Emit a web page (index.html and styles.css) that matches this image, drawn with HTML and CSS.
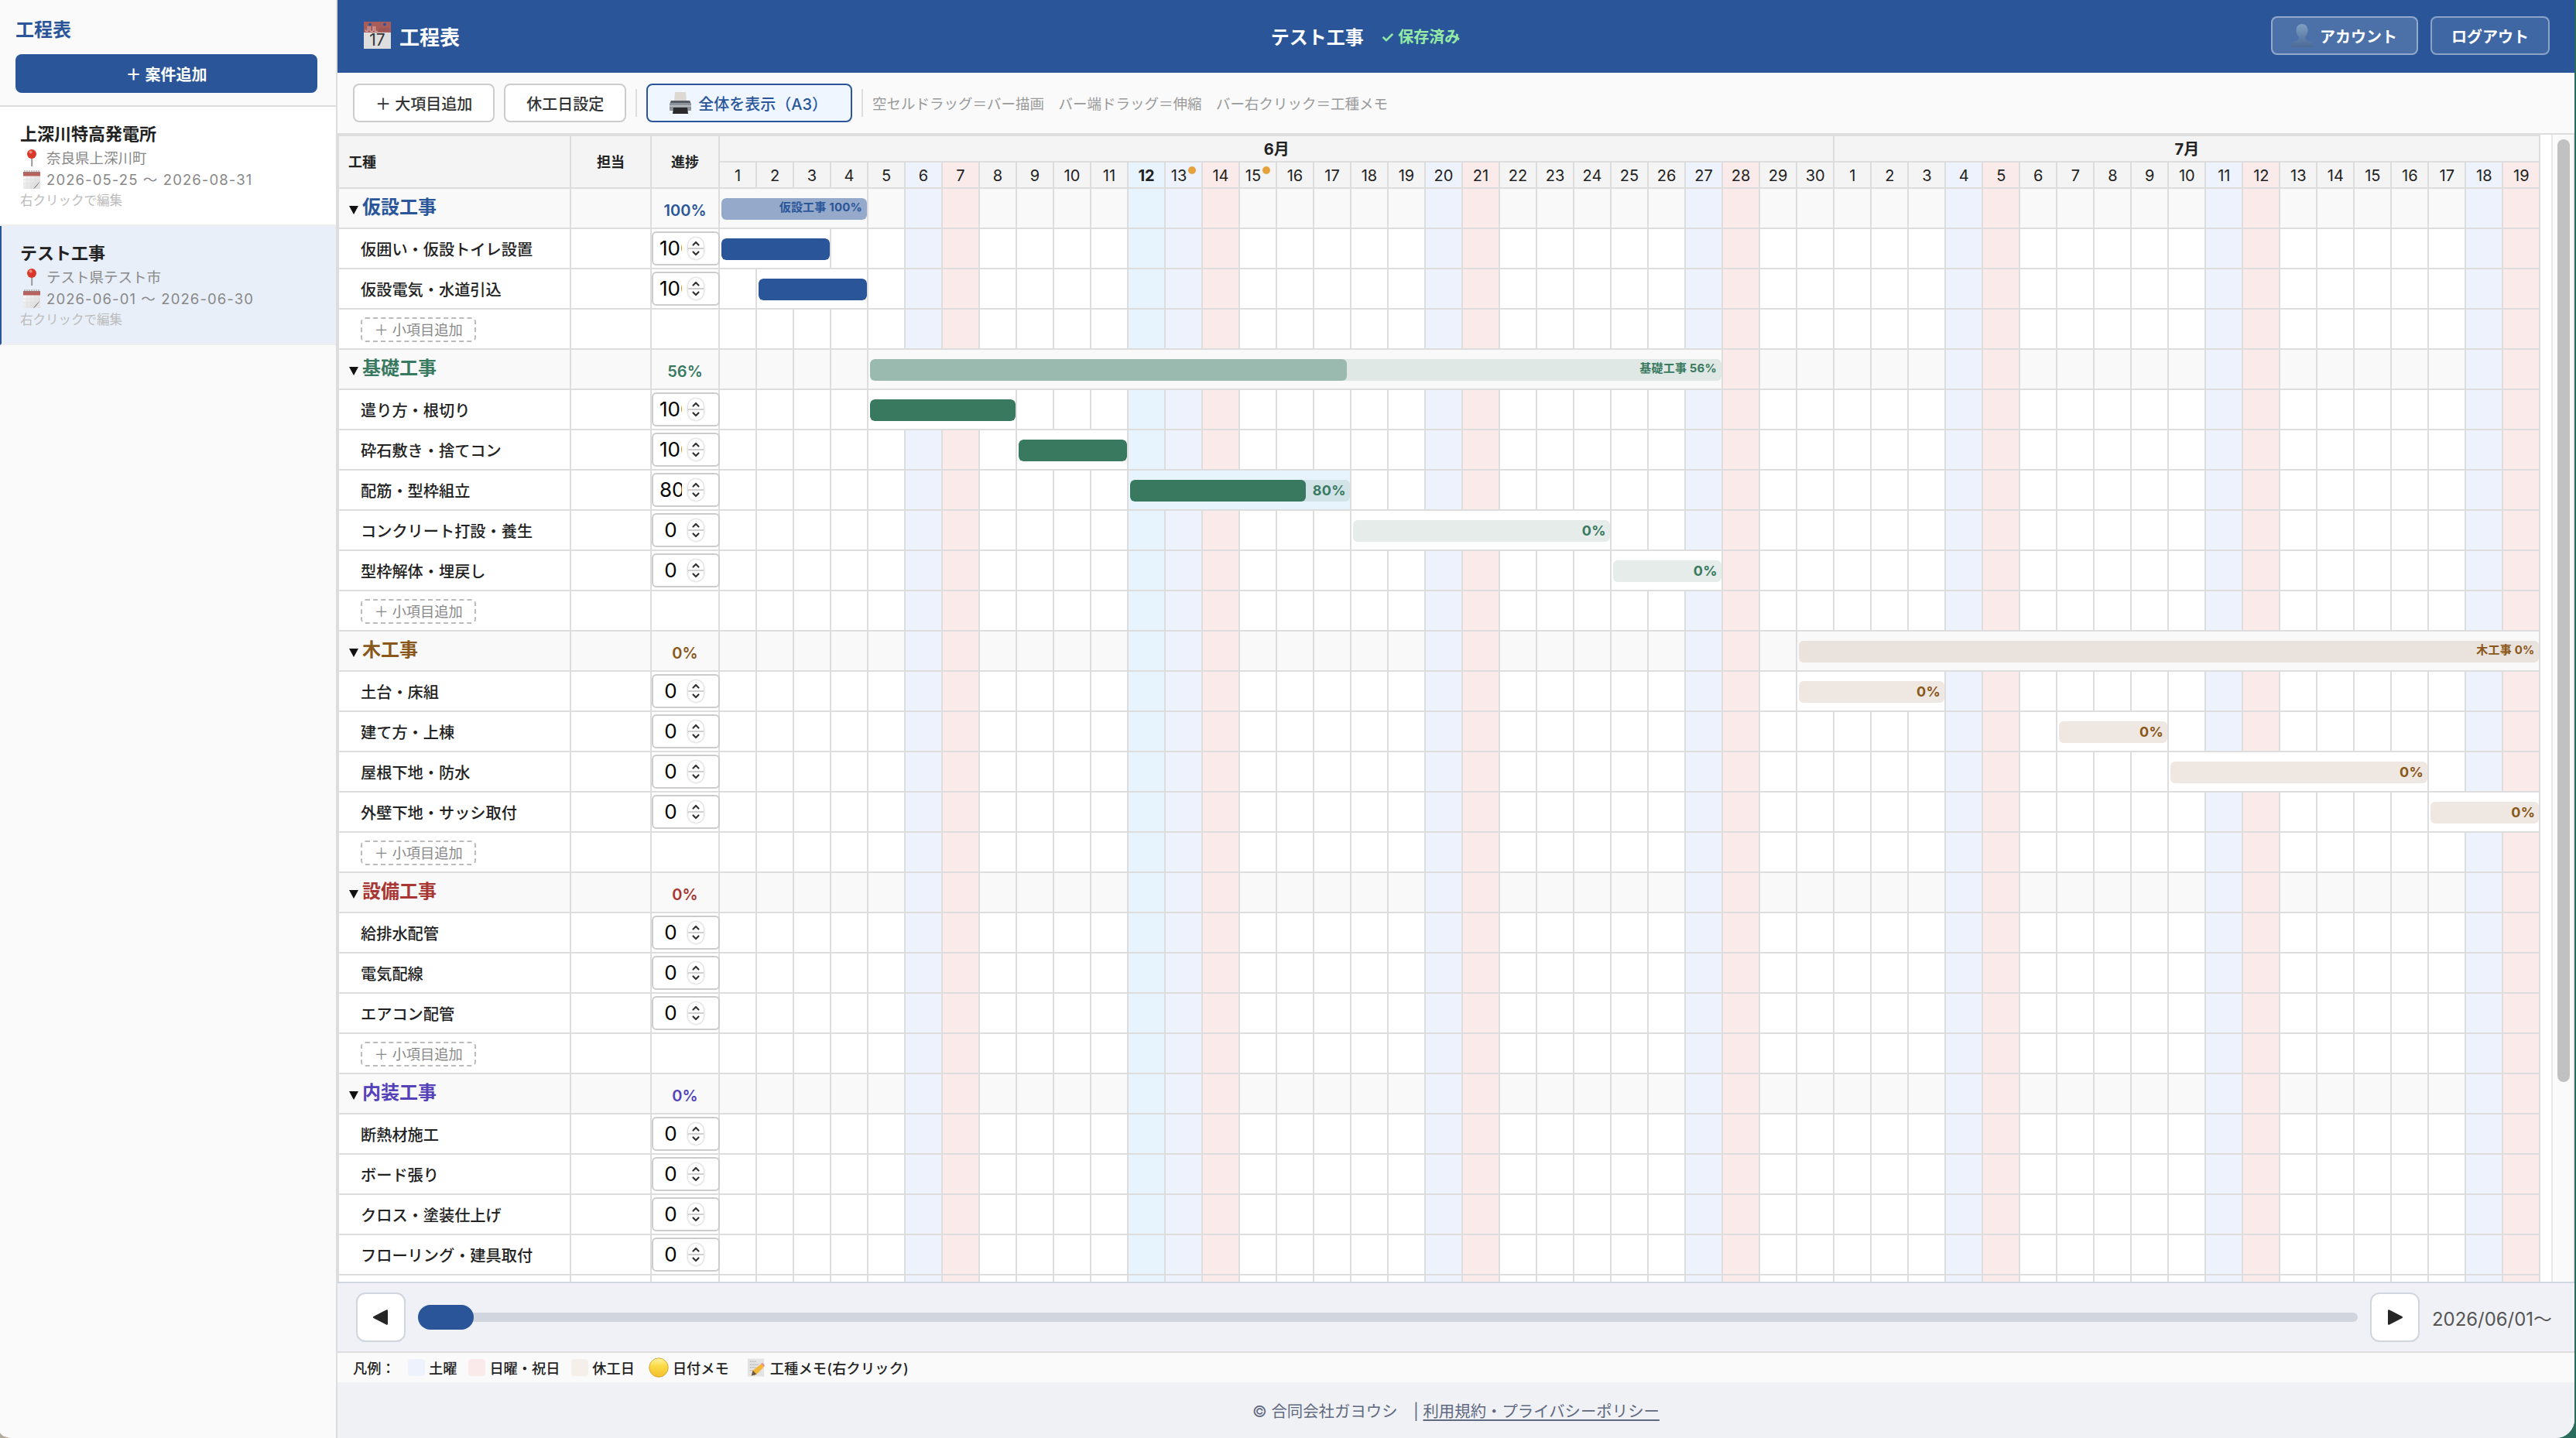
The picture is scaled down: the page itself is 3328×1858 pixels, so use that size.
FILE: index.html
```html
<!DOCTYPE html>
<html lang="ja">
<head>
  <meta charset="UTF-8">
  <title>工程表</title>
  <link rel="stylesheet" href="styles.css">
</head>
<body>
  <!-- アイコン定義 -->
  <svg class="defs" width="0" height="0">
    <defs>
      <linearGradient id="gPerson" x1="0" y1="0" x2="0" y2="1"><stop offset="0" stop-color="#7f9fc2"/><stop offset="1" stop-color="#4b6a97"/></linearGradient>
      <linearGradient id="gDot" x1="0" y1="0" x2="0" y2="1"><stop offset="0" stop-color="#fff3a0"/><stop offset=".45" stop-color="#fbd943"/><stop offset="1" stop-color="#f3c02f"/></linearGradient>
      <linearGradient id="gPaper" x1="0" y1="0" x2="1" y2="1"><stop offset="0" stop-color="#fff"/><stop offset="1" stop-color="#d5d5d5"/></linearGradient>
      <symbol id="pin" viewBox="0 0 24 24">
        <rect x="11.2" y="10" width="2" height="13" fill="#999"/>
        <circle cx="12" cy="7" r="6" fill="#d8392b"/>
        <circle cx="10.6" cy="4.6" r="2" fill="#f08a7c"/>
      </symbol>
      <symbol id="note" viewBox="0 0 24 26">
        <path d="M1 3h22v13l-9 9H1z" fill="url(#gPaper)"/>
        <path d="M1 3h22v5.500H1z" fill="#b9605d"/>
        <path d="M3 1v4M6 1v4M9 1v4M12 1v4M15 1v4M18 1v4M21 1v4" stroke="#888" stroke-width="1"/>
        <path d="M6 9v15M11 9v15M16 9v12M1 13h21M1 18h20" stroke="#ddd" stroke-width=".7"/>
        <path d="M23 15l-9 10c4-1 4-3 5-4z" fill="#555"/>
        <path d="M23 16v9h-8z" fill="#e4e4e4"/>
      </symbol>
      <symbol id="memo" viewBox="0 0 24 26">
        <path d="M1 1h22v24H1z" fill="#e3e3e3"/>
        <path d="M4 5h9M4 9h12M4 13h8M4 17h5" stroke="#bbb" stroke-width="1.500" stroke-dasharray="2 1"/>
        <path d="M6 24l2-7L19 8l4 4-10 10z" fill="#f3b63b"/>
        <path d="M19 8l2-1.500 3 3.500-1 2z" fill="#e58a8a"/>
        <path d="M6 24l2-7 5 5z" fill="#6b5540"/>
      </symbol>
    </defs>
  </svg>

  <div class="app">
    <aside class="sidebar">
      <div class="sidebar-head">
        <h2>工程表</h2>
        <button class="btn-new">＋ 案件追加</button>
      </div>
      <div class="project">
        <div class="project-name">上深川特高発電所</div>
        <div class="project-meta"><svg class="ico"><use href="#pin"/></svg>奈良県上深川町</div>
        <div class="project-meta date"><svg class="ico"><use href="#note"/></svg>2026-05-25 ～ 2026-08-31</div>
        <div class="project-hint">右クリックで編集</div>
      </div>
      <div class="project active">
        <div class="project-name">テスト工事</div>
        <div class="project-meta"><svg class="ico"><use href="#pin"/></svg>テスト県テスト市</div>
        <div class="project-meta date"><svg class="ico"><use href="#note"/></svg>2026-06-01 ～ 2026-06-30</div>
        <div class="project-hint">右クリックで編集</div>
      </div>
    </aside>

    <main class="main">
      <header class="header">
        <div class="logo">
          <svg width="36" height="36" viewBox="0 0 36 36">
            <rect width="35" height="35" fill="#dedede"/>
            <rect width="35" height="14" fill="#a85d5b"/>
            <circle cx="8" cy="3.500" r="2" fill="#2a5699"/><circle cx="27" cy="3.500" r="2" fill="#2a5699"/>
            <path d="M20 8v4M22 8v4M24 8v4M26 8v4M28 8v4M30 8v4M32 8v4" stroke="#925352" stroke-width="1"/>
            <text x="1.500" y="12.500" class="cal-month">JUL</text>
            <text x="17.500" y="31" class="cal-day">17</text>
          </svg>
          <span>工程表</span>
        </div>
        <div class="header-title"><span>テスト工事</span><span class="saved">✓ 保存済み</span></div>
        <div class="header-btns">
          <button class="btn-head account">
            <svg width="32" height="30" viewBox="0 0 32 30"><path d="M16 0c5 0 8 4 7.500 9-.3 4-2 6-3.500 8 0 3 1 4 4 5 4 1 6.500 2.500 7 8H1c.5-5.500 3-7 7-8 3-1 4-2 4-5-1.500-2-3.200-4-3.500-8C8 4 11 0 16 0z" fill="url(#gPerson)"/></svg>
            アカウント
          </button>
          <button class="btn-head">ログアウト</button>
        </div>
      </header>

      <div class="toolbar">
        <button class="btn-tool">＋ 大項目追加</button>
        <button class="btn-tool">休工日設定</button>
        <span class="sep"></span>
        <button class="btn-tool primary">
          <svg width="30" height="30" viewBox="0 0 30 30">
            <path d="M8 1h14l1 12H7z" fill="#ddd9d2"/>
            <path d="M3 12h24l2 4v9H1v-9z" fill="#8e949c"/>
            <path d="M3 12h24l1 3H2z" fill="#555c66"/>
            <path d="M1 18h28v2H1z" fill="#b5bac0"/>
            <path d="M6 21h18l1 8H5z" fill="#2b2b2b"/>
          </svg>
          全体を表示（A3）
        </button>
        <span class="sep"></span>
        <span class="hint">空セルドラッグ＝バー描画　バー端ドラッグ＝伸縮　バー右クリック＝工種メモ</span>
      </div>

      <div class="chart">
        <div class="chart-view"><table class="gantt" id="gantt"></table></div>
        <div class="vscroll"><div class="vthumb"></div></div>
      </div>

      <div class="slider-bar">
        <button class="btn-arrow"><svg width="24" height="24" viewBox="0 0 24 24"><path d="M21 3.500v17q0 2-2 1L2.500 13q-1.500-1 0-2L19 2.500q2-1 2 1z" fill="#262626"/></svg></button>
        <div class="track"><div class="knob"></div></div>
        <button class="btn-arrow"><svg width="24" height="24" viewBox="0 0 24 24"><path d="M3 3.500v17q0 2 2 1L21.500 13q1.500-1 0-2L5 2.500q-2-1-2 1z" fill="#262626"/></svg></button>
        <span class="slider-date">2026/06/01～</span>
      </div>

      <div class="legend">
        <span class="legend-label">凡例：</span>
        <span class="item"><i class="sw sat"></i>土曜</span>
        <span class="item"><i class="sw sun"></i>日曜・祝日</span>
        <span class="item"><i class="sw off"></i>休工日</span>
        <span class="item"><svg class="dot-ico" viewBox="0 0 26 26"><circle cx="13" cy="13" r="12.200" fill="url(#gDot)" stroke="#d9a62e" stroke-width="1"/></svg>日付メモ</span>
        <span class="item memo"><svg class="memo-ico"><use href="#memo"/></svg>工種メモ(右クリック)</span>
      </div>

      <footer class="footer">© 合同会社ガヨウシ　| <a href="#">利用規約・プライバシーポリシー</a></footer>
    </main>
  </div>

  <script src="script.js"></script>
</body>
</html>
```

FILE: styles.css
```css
* {
  box-sizing: border-box;
}

body {
  margin: 0;
  height: 1858px;
  overflow: hidden;
  background: linear-gradient(to right, #b0a898 50%, #2a6b5e 50%);
  font-family: Inter, "Noto Sans CJK JP", sans-serif;
  color: #222;
}

button {
  font-family: inherit;
  padding: 0;
}

.defs {
  position: absolute;
}

.app {
  display: flex;
  width: 3326px;
  height: 1858px;
  background: #fafafa;
  border-radius: 0 0 24px 0;
  border-bottom-left-radius: 18px 8px;
  overflow: hidden;
}

/* サイドバー */
.sidebar {
  width: 436px;
  flex: none;
  background: #fafafa;
  border-right: 2px solid #ddd;
}

.sidebar-head {
  height: 138px;
  padding: 22px 24px 0 20px;
  border-bottom: 2px solid #ddd;
}

.sidebar-head h2 {
  margin: 0 0 14px;
  font-size: 24px;
  line-height: 34px;
  font-weight: 600;
  color: #2a5699;
}

.btn-new {
  display: block;
  width: 390px;
  height: 50px;
  border: none;
  border-radius: 8px;
  background: #2a5699;
  color: #fff;
  font-size: 20px;
  font-weight: 600;
}

.project {
  height: 154px;
  padding: 20px 24px 0 26px;
  background: #fff;
  border-bottom: 2px solid #eee;
}

.project.active {
  background: #e9eff9;
  border-left: 2px solid #2a5699;
  padding-left: 24px;
}

.project-name {
  font-size: 22px;
  font-weight: 600;
  line-height: 31px;
  margin-bottom: 1px;
}

.project-meta {
  display: flex;
  align-items: center;
  font-size: 18.5px;
  line-height: 28px;
  color: #888;
}

.project-meta.date {
  letter-spacing: 1.1px;
}

.ico {
  width: 24px;
  height: 26px;
  margin: 0 7px 0 3px;
}

.project-hint {
  font-size: 16.5px;
  line-height: 27px;
  color: #bbb;
}

/* ヘッダー */
.main {
  flex: 1;
  display: flex;
  flex-direction: column;
  min-width: 0;
}

.header {
  display: flex;
  justify-content: space-between;
  align-items: center;
  height: 94px;
  padding: 0 32px 2px;
  background: #2a5699;
  color: #fff;
}

.logo {
  display: flex;
  align-items: center;
  gap: 10px;
  font-size: 26px;
  font-weight: 700;
  padding-left: 2px;
}

.cal-month {
  font-size: 9px;
  font-weight: 400;
  fill: #e6c9c8;
}

.cal-day {
  font-size: 21px;
  font-weight: 400;
  text-anchor: middle;
  fill: #333;
}

.header-title {
  display: flex;
  align-items: center;
  gap: 22px;
  font-size: 24px;
  font-weight: 600;
}

.saved {
  font-size: 20px;
  color: #95eaa5;
}

.header-btns {
  display: flex;
  gap: 16px;
}

.btn-head {
  display: flex;
  align-items: center;
  height: 50px;
  padding: 0 25px;
  border: 2px solid rgba(255, 255, 255, 0.4);
  border-radius: 8px;
  background: rgba(255, 255, 255, 0.1);
  color: #fff;
  font-size: 20px;
  font-weight: 600;
}

.btn-head.account {
  gap: 7px;
  background: rgba(255, 255, 255, 0.16);
  padding: 0 25px 0 22px;
}

/* ツールバー */
.toolbar {
  display: flex;
  align-items: center;
  gap: 12px;
  height: 80px;
  padding: 0 20px;
  background: #fafafa;
  border-bottom: 2px solid #ddd;
}

.btn-tool {
  display: flex;
  align-items: center;
  height: 50px;
  padding: 0 27px;
  border: 2px solid #ccc;
  border-radius: 8px;
  background: #fff;
  color: #333;
  font-size: 20px;
  font-weight: 500;
}

.btn-tool.primary {
  gap: 8px;
  padding-right: 30px;
  border-color: #2a5699;
  background: #eff6ff;
  color: #2a5699;
}

.sep {
  width: 2px;
  height: 36px;
  background: #ddd;
}

.hint {
  font-size: 18.5px;
  color: #999;
}

/* 工程表 */
.chart {
  display: flex;
  height: 1482px;
  background: #fff;
}

.chart-view {
  flex: 1;
  overflow: hidden;
}

.gantt {
  table-layout: fixed;
  width: 2846px;
  border-collapse: separate;
  border-spacing: 0;
  border-top: 2px solid #ddd;
  border-left: 2px solid #ddd;
}

.gantt th,
.gantt td {
  padding: 0;
  border-right: 2px solid #ddd;
  border-bottom: 2px solid #ddd;
}

.gantt th {
  height: 34px;
  padding-top: 2px;
  background: #f4f4f4;
  font-size: 20px;
  font-weight: 400;
  line-height: 30px;
}

.gantt th.head {
  font-size: 18px;
  font-weight: 700;
}

.gantt th.first {
  text-align: left;
  padding-left: 12px;
}

.gantt th.month {
  font-weight: 700;
}

.gantt td {
  height: 52px;
}

.gantt tr.group td {
  background: #f9f9f9;
}

.gantt th.sat, .gantt td.sat, .gantt tr.group td.sat { background: #edf2fc; }
.gantt th.sun, .gantt td.sun, .gantt tr.group td.sun { background: #faeaea; }
.gantt th.today, .gantt td.today, .gantt tr.group td.today { background: #e8f4fd; }

.gantt th.today {
  font-weight: 700;
}

.memo-dot {
  display: inline-block;
  width: 10px;
  height: 10px;
  margin-left: 2px;
  border-radius: 50%;
  background: #e6a23c;
  vertical-align: 9px;
}

.group-name {
  display: flex;
  align-items: center;
  padding-left: 13px;
  gap: 5px;
  font-size: 24px;
  font-weight: 600;
  line-height: 34px;
  margin-bottom: 2px;
}

.caret {
  width: 0;
  border: 6px solid transparent;
  border-top: 11px solid #111;
  border-bottom: 0;
  margin-top: 7px;
}

.group-pct {
  text-align: center;
  font-size: 20px;
  font-weight: 600;
  padding-top: 5px;
}

.task-name {
  padding-left: 28px;
  font-size: 20.2px;
  font-weight: 500;
}

.btn-sub {
  display: block;
  width: 149px;
  height: 32px;
  margin: 2px 0 0 28px;
  border: 2px dashed #bbb;
  border-radius: 6px;
  background: #fff;
  color: #888;
  font-size: 18.2px;
  line-height: 26px;
}

.pct-box {
  display: flex;
  align-items: center;
  position: relative;
  width: 88px;
  height: 44px;
  margin-right: -2px;
  padding-left: 8px;
  border: 2px solid #ccc;
  border-radius: 6px;
  background: #fff;
  color: #000;
}

.pct-num {
  width: 29px;
  overflow: hidden;
  text-align: center;
  font-size: 26px;
  line-height: 36px;
}

.spin {
  width: 20px;
  height: 28px;
  margin-left: 8px;
  border-radius: 10px;
  box-shadow: 0 0 3px rgba(0, 0, 0, 0.35);
}

.bar {
  position: relative;
  height: 28px;
  margin: 2px 0 0 2px;
  border-radius: 6px;
  overflow: hidden;
}

.bar-fill {
  height: 28px;
  border-radius: 6px;
}

.bar-label {
  position: absolute;
  right: 5px;
  top: 0;
  font-size: 18px;
  line-height: 28px;
  font-weight: 700;
  letter-spacing: 0.4px;
}

.group .bar-label {
  right: 6px;
  font-size: 15px;
  line-height: 24px;
  letter-spacing: 0.2px;
}

.vscroll {
  width: 30px;
  padding: 6px 6px;
  background: #fafafa;
  border-left: 2px solid #e8e8e8;
  border-right: 2px solid #ececec;
}

.vthumb {
  width: 16px;
  height: 1218px;
  border-radius: 8px;
  background: #c1c1c1;
}

/* 横スライダー */
.slider-bar {
  display: flex;
  align-items: center;
  gap: 16px;
  height: 92px;
  padding: 0 32px 0 24px;
  background: #eff1f6;
  border-top: 2px solid #d0d7de;
  border-bottom: 2px solid #ddd;
}

.btn-arrow {
  display: flex;
  align-items: center;
  justify-content: center;
  width: 64px;
  height: 64px;
  flex: none;
  border: 2px solid #d0d5de;
  border-radius: 12px;
  background: #fff;
}

.track {
  display: flex;
  align-items: center;
  flex: 1;
  height: 12px;
  border-radius: 6px;
  background: #d0d5de;
}

.knob {
  width: 72px;
  height: 32px;
  border-radius: 16px;
  background: #2a5699;
}

.slider-date {
  width: 152px;
  font-size: 23.9px;
  white-space: nowrap;
  color: #555;
}

.legend {
  display: flex;
  align-items: center;
  height: 38px;
  background: #fafafa;
  padding: 0 20px;
  font-size: 18.2px;
  font-weight: 500;
}

.legend-label {
  width: 71px;
}

.item {
  display: flex;
  align-items: center;
  gap: 5px;
  margin-right: 15px;
}

.sw {
  width: 22px;
  height: 22px;
  border-radius: 4px;
}

.sw.sat { background: #edf2fc; }
.sw.sun { background: #faeaea; }
.sw.off { background: #f4efe8; }

.dot-ico {
  width: 26px;
  height: 26px;
  margin-left: 3px;
}

.item.memo {
  gap: 7px;
  margin-left: 8px;
  letter-spacing: 0.2px;
}

.memo-ico {
  width: 23px;
  height: 26px;
}

.footer {
  flex: 1;
  display: flex;
  align-items: center;
  justify-content: center;
  white-space: pre;
  background: #f0f1f5;
  color: #5f6980;
  font-size: 20.4px;
}

.footer a {
  color: inherit;
  text-decoration: underline;
  text-decoration-thickness: 2px;
  text-underline-offset: 3px;
}
```

FILE: script.js
```js
const DAYS = 49;      // 6/1 〜 7/19
const TODAY = 11;
const MEMO_DAYS = [12, 14];

// bar: [開始日, 日数]
const groups = [
  { name: '仮設工事', pct: 100, color: '#2a5699', bg: '#e0e6ef', fill: '#95a9cb', sub: '#e4eaf3', bar: [0, 4], tasks: [
    ['仮囲い・仮設トイレ設置', 100, 0, 3],
    ['仮設電気・水道引込', 100, 1, 3]
  ]},
  { name: '基礎工事', pct: 56, color: '#38795f', bg: '#dfe8e4', fill: '#9bbaaf', sub: '#e5ece9', bar: [4, 23], tasks: [
    ['遣り方・根切り', 100, 4, 4],
    ['砕石敷き・捨てコン', 100, 8, 3],
    ['配筋・型枠組立', 80, 11, 6],
    ['コンクリート打設・養生', 0, 17, 7],
    ['型枠解体・埋戻し', 0, 24, 3]
  ]},
  { name: '木工事', pct: 0, color: '#895719', bg: '#eae2dc', fill: '#c3a98a', sub: '#efe7e1', bar: [29, 20], tasks: [
    ['土台・床組', 0, 29, 4],
    ['建て方・上棟', 0, 36, 3],
    ['屋根下地・防水', 0, 39, 7],
    ['外壁下地・サッシ取付', 0, 46, 3]
  ]},
  { name: '設備工事', pct: 0, color: '#a83632', tasks: [
    ['給排水配管', 0], ['電気配線', 0], ['エアコン配管', 0]
  ]},
  { name: '内装工事', pct: 0, color: '#5442b8', tasks: [
    ['断熱材施工', 0], ['ボード張り', 0], ['クロス・塗装仕上げ', 0], ['フローリング・建具取付', 0]
  ]}
];

function dayClass(i) {
  if (i === TODAY) return 'today';
  if (i % 7 === 5) return 'sat';
  if (i % 7 === 6) return 'sun';
  return '';
}

function barHtml(g, pct, label, bg) {
  const text = label ? `<span class="bar-label" style="color:${g.color}">${label}</span>` : '';
  return `<div class="bar" style="background:${bg.back}">` +
    `<div class="bar-fill" style="width:${pct}%;background:${bg.fill}"></div>${text}</div>`;
}

function dayCells(start, len, html) {
  let out = '';
  for (let i = 0; i < DAYS; i++) {
    if (i === start) {
      out += `<td class="${dayClass(i)}" colspan="${len}">${html}</td>`;
      i += len - 1;
    } else {
      out += `<td class="${dayClass(i)}"></td>`;
    }
  }
  return out;
}

const spinner = `<svg class="spin" viewBox="0 0 20 28">
  <rect width="20" height="28" rx="10" fill="#fff"/>
  <path d="M0 14h20" stroke="#d0d0d0" stroke-width="2"/>
  <path d="M6.500 9.500L10 6l3.500 3.500M6.500 18.500L10 22l3.500-3.500" fill="none" stroke="#333" stroke-width="2.200" stroke-linecap="round" stroke-linejoin="round"/>
</svg>`;

let html = '<colgroup><col style="width:300px"><col style="width:104px"><col style="width:88px">';
for (let i = 0; i < DAYS; i++) html += '<col style="width:48px">';
html += '</colgroup><tr><th class="head first" rowspan="2">工種</th><th class="head" rowspan="2">担当</th>' +
  '<th class="head" rowspan="2">進捗</th><th class="month" colspan="30">6月</th><th class="month" colspan="19">7月</th></tr><tr>';
for (let i = 0; i < DAYS; i++) {
  const dot = MEMO_DAYS.includes(i) ? '<span class="memo-dot"></span>' : '';
  html += `<th class="${dayClass(i)}">${i < 30 ? i + 1 : i - 29}${dot}</th>`;
}
html += '</tr>';

groups.forEach(g => {
  const bar = g.bar || [-1, 0];
  const groupBar = g.bar ? barHtml(g, g.pct, `${g.name} ${g.pct}%`, { back: g.bg, fill: g.fill }) : '';
  html += `<tr class="group"><td><div class="group-name" style="color:${g.color}"><i class="caret"></i>${g.name}</div></td><td></td>` +
    `<td><div class="group-pct" style="color:${g.color}">${g.pct}%</div></td>${dayCells(bar[0], bar[1], groupBar)}</tr>`;

  g.tasks.forEach(([name, pct, start, len]) => {
    // 完了したバーにはラベルを出さない
    const back = start === TODAY ? '#d2e3e8' : g.sub;
    const taskBar = len ? barHtml(g, pct, pct < 100 ? `${pct}%` : '', { back, fill: g.color }) : '';
    html += `<tr><td><div class="task-name">${name}</div></td><td></td>` +
      `<td><div class="pct-box"><span class="pct-num">${pct}</span>${spinner}</div></td>${dayCells(start, len, taskBar)}</tr>`;
  });

  html += `<tr><td><button class="btn-sub">＋ 小項目追加</button></td><td></td><td></td>${dayCells(-1, 0, '')}</tr>`;
});

document.getElementById('gantt').innerHTML = html;
```
